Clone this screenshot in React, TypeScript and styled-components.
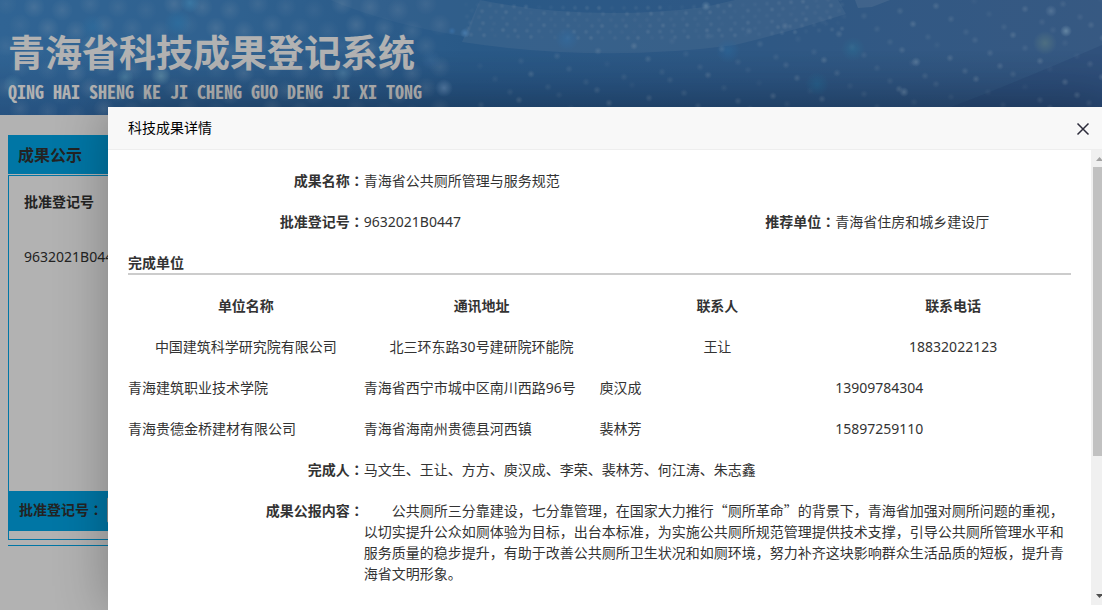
import React from "react";
import styled, { createGlobalStyle } from "styled-components";

const GlobalStyle = createGlobalStyle`
  *, *::before, *::after { box-sizing: border-box; }
  html, body { margin: 0; padding: 0; }
  body {
    background: #fff;
    color: #333;
    font-family: "Noto Sans", "Noto Sans CJK SC", sans-serif;
    font-size: 14px;
    line-height: 21px;
  }
  h1, h2, h3, p, dl, dd { margin: 0; font-size: inherit; font-weight: inherit; }
`;

/* ---------- page behind the dialog ---------- */

const Page = styled.div`
  position: relative;
  min-height: 100vh;
  overflow: hidden;
`;

const Banner = styled.header`
  display: grid;
  height: 115px;
  overflow: hidden;
  background: #3f86c8;
  > * { grid-area: 1 / 1; }
`;

const BannerArt = styled.svg`
  width: 100%;
  height: 115px;
`;

const BannerText = styled.div`
  padding: 29px 8px 0;
  color: #fff;
  white-space: nowrap;
`;

const SiteTitle = styled.h1`
  font-family: "Noto Sans CJK SC", sans-serif;
  font-size: 37px;
  font-weight: 700;
  line-height: 44px;
`;

const SiteSubtitle = styled.p`
  margin-top: 6px;
  font-family: "Noto Sans Mono CJK SC", "Liberation Mono", monospace;
  font-size: 18px;
  font-weight: 700;
  line-height: 24px;
`;

const Main = styled.main`
  padding: 20px 8px 0;
`;

const PanelTitle = styled.h2`
  padding: 2px 10px 0;
  background: #00aaec;
  font-size: 16px;
  font-weight: 700;
  line-height: 37px;
`;

const Panel = styled.section`
  display: flex;
  flex-direction: column;
  height: 365px;
  margin-top: 1px;
  border: 1px solid #00aaec;
`;

const ListTable = styled.table`
  border-collapse: collapse;
  th, td {
    padding: 0 15px;
    text-align: left;
    line-height: 52px;
  }
  td { line-height: 58px; }
`;

const SearchBar = styled.form`
  display: flex;
  align-items: center;
  gap: 4px;
  height: 40px;
  margin-top: auto;
  margin-bottom: 8px;
  padding: 0 10px 3px;
  background: #00aaec;
  font-weight: 700;
`;

const SearchInput = styled.input`
  width: 180px;
  height: 26px;
  border: 1px solid #ccc;
  border-radius: 2px;
  background: #fff;
`;

const Rule = styled.hr`
  height: 1px;
  margin: 5px 0 0;
  border: 0;
  background: #00aaec;
`;

/* ---------- dialog ---------- */

const Shade = styled.div`
  position: absolute;
  inset: 0;
  z-index: 2;
  display: flex;
  padding: 107px 0 0 108px;
  overflow: hidden;
  background: rgba(0, 0, 0, 0.3);
`;

const Dialog = styled.section`
  display: flex;
  flex: 1;
  flex-direction: column;
  margin-right: -6px;
  background: #fff;
  box-shadow: 1px 1px 50px rgba(0, 0, 0, 0.3);
`;

const DialogHeader = styled.header`
  display: flex;
  align-items: flex-start;
  justify-content: space-between;
  height: 43px;
  padding: 10px 16px 0 20px;
  border-bottom: 1px solid #eee;
  background: #f8f8f8;
  color: #000;
`;

const CloseButton = styled.button`
  display: flex;
  align-items: center;
  height: 24px;
  padding: 0 2px;
  border: 0;
  background: none;
  color: #2d2c3b;
  cursor: pointer;
`;

const DialogBody = styled.div`
  display: flex;
  flex: 1;
  min-height: 0;
  padding-bottom: 5px;
`;

const Content = styled.div`
  flex: 1;
  min-width: 0;
  padding: 10px 20px 0;
`;

const Fields = styled.dl`
  display: grid;
  grid-template-columns: repeat(4, 1fr);
`;

const Label = styled.dt`
  padding: 10px 0;
  font-weight: 700;
  text-align: right;
`;

const ColonMark = styled.span`
  font-family: "Noto Sans CJK TC", sans-serif;
`;

const Value = styled.dd<{ $span?: number }>`
  grid-column: span ${(p) => p.$span ?? 1};
  padding: 10px 0;
`;

const Report = styled(Value)`
  padding-right: 6px;
  font-family: "Noto Sans CJK SC", sans-serif;
  text-indent: 2em;
`;

const SectionTitle = styled.h3`
  margin-bottom: 10px;
  padding-top: 10px;
  border-bottom: 2px solid #ccc;
  font-weight: 700;
`;

const UnitTable = styled.table`
  width: 100%;
  border-collapse: collapse;
  table-layout: fixed;
`;

const Cell = styled.td<{ $center?: boolean }>`
  padding: 10px 0;
  text-align: ${(p) => (p.$center ? "center" : "left")};
`;

const ScrollTrack = styled.div`
  display: flex;
  flex-direction: column;
  align-items: center;
  width: 17px;
  background: #f0f0f0;
`;

const ScrollArrow = styled.svg`
  width: 17px;
  height: 17px;
`;

const ScrollThumb = styled.div`
  width: 13px;
  height: 289px;
  margin-bottom: auto;
  background: #c1c1c1;
`;

/* The Traditional Chinese form of the colon sits in the middle of its box. */
const Colon = () => <ColonMark lang="zh-TW">：</ColonMark>;

const units = [
  ["中国建筑科学研究院有限公司", "北三环东路30号建研院环能院", "王让", "18832022123"],
  ["青海建筑职业技术学院", "青海省西宁市城中区南川西路96号", "庾汉成", "13909784304"],
  ["青海贵德金桥建材有限公司", "青海省海南州贵德县河西镇", "裴林芳", "15897259110"],
];

type Dot = { x: number; y: number; r: number; o: number };

const bandDots: Dot[] = [];
for (let row = 0; row < 6; row++) {
  for (let i = 0; i < 32; i++) {
    const seed = (i * 37 + row * 53 + i * row * 7) % 17;
    const x = 466 + i * 12 + (row % 2) * 4 + (seed % 3);
    const sag = 1 - ((x - 610) / 240) ** 2;
    const y = 4 + row * 6 + sag * 10 - 6;
    bandDots.push({ x, y, r: 3, o: 0.03 + (seed / 17) * 0.17 });
  }
}

const fieldDots: Dot[] = [];
for (let row = 0; row < 10; row++) {
  for (let i = 0; i < 18; i++) {
    const seed = (i * 29 + row * 41 + i * row * 5) % 13;
    const x = 480 + i * 38 + (row % 3) * 13 + (seed % 5);
    const y = 66 + row * 13 - i * 5;
    fieldDots.push({ x, y, r: 4, o: 0.06 + (seed / 13) * 0.2 });
  }
}

const hazeDots: Dot[] = [];
for (let row = 0; row < 6; row++) {
  for (let i = 0; i < 16; i++) {
    const seed = (i * 31 + row * 23) % 11;
    hazeDots.push({
      x: 6 + i * 28 + (row % 2) * 14,
      y: 4 + row * 21 + (i % 3) * 3,
      r: 11,
      o: 0.08 + (seed / 11) * 0.12,
    });
  }
}

const glows: Array<[number, number, number, string, number]> = [
  [190, 3, 10, "#5cb8f5", 0.7],
  [178, 23, 14, "#3fa4ec", 0.6],
  [93, 27, 13, "#3fa4ec", 0.4],
  [125, 77, 9, "#7cc5ee", 0.6],
  [161, 76, 10, "#8accf0", 0.7],
  [343, 73, 10, "#7cc0f0", 0.6],
  [13, 84, 10, "#7cc5ee", 0.5],
  [444, 88, 9, "#83b9f2", 0.8],
  [431, 60, 10, "#5b9bdc", 0.5],
  [465, 33, 5, "#6fb8ff", 0.8],
  [452, 31, 4, "#55a6f5", 0.7],
  [567, 39, 12, "#4a9be6", 0.6],
  [728, 51, 12, "#3f94dd", 0.6],
  [853, 49, 12, "#3f9bd2", 0.6],
  [817, 84, 12, "#3592cf", 0.6],
  [1045, 43, 12, "#86b3b8", 0.6],
  [1066, 31, 6, "#a2d0f5", 0.8],
  [1051, 11, 6, "#91bce8", 0.6],
  [706, 6, 5, "#91c3ef", 0.7],
  [916, 62, 5, "#91bce8", 0.7],
  [904, 92, 5, "#91bce8", 0.7],
];

function BannerBackdrop() {
  return (
    <BannerArt viewBox="0 0 1102 115" preserveAspectRatio="xMidYMid slice" aria-hidden="true">
      <defs>
        <linearGradient id="sky" x1="0" y1="0" x2="1" y2="0">
          <stop offset="0" stopColor="#4690d4" />
          <stop offset="0.2" stopColor="#458cce" />
          <stop offset="0.42" stopColor="#3c80c2" />
          <stop offset="0.7" stopColor="#447fbe" />
          <stop offset="1" stopColor="#4f80bb" />
        </linearGradient>
        <linearGradient id="dusk" x1="0" y1="0" x2="0" y2="1">
          <stop offset="0.45" stopColor="#1c4684" stopOpacity="0" />
          <stop offset="1" stopColor="#1c4684" stopOpacity="0.35" />
        </linearGradient>
        <radialGradient id="dot">
          <stop offset="0" stopColor="#b5d5f5" />
          <stop offset="1" stopColor="#b5d5f5" stopOpacity="0" />
        </radialGradient>
        {glows.map(([, , , color], i) => (
          <radialGradient id={`glow${i}`} key={i}>
            <stop offset="0" stopColor={color} />
            <stop offset="0.4" stopColor={color} stopOpacity="0.6" />
            <stop offset="1" stopColor={color} stopOpacity="0" />
          </radialGradient>
        ))}
      </defs>
      <rect width="1102" height="115" fill="url(#sky)" />
      <rect width="1102" height="115" fill="url(#dusk)" />
      <path d="M330 0 H480 L468 37 Q390 25 330 0 Z" fill="#7fb0e0" opacity="0.14" />
      <path d="M480 0 Q590 22 705 7 L735 0 H838 L846 14 Q790 32 735 45 Q600 63 462 42 Z" fill="#7fa9d8" opacity="0.26" />
      <path d="M855 0 H890 L872 7 L858 8 Z" fill="#8fb5dd" opacity="0.3" />
      <path d="M1102 45 Q1010 85 930 115 H1102 Z" fill="#284f92" opacity="0.22" />
      <g fill="url(#dot)">
        {[...bandDots, ...fieldDots, ...hazeDots].map((d, i) => (
          <circle key={i} cx={d.x} cy={d.y} r={d.r} opacity={d.o * 1.5} />
        ))}
      </g>
      {glows.map(([x, y, r, , o], i) => (
        <circle key={i} cx={x} cy={y} r={r} fill={`url(#glow${i})`} opacity={o} />
      ))}
    </BannerArt>
  );
}

export default function App() {
  return (
    <Page lang="zh-CN">
      <GlobalStyle />
      <Banner>
        <BannerBackdrop />
        <BannerText>
          <SiteTitle>青海省科技成果登记系统</SiteTitle>
          <SiteSubtitle>QING HAI SHENG KE JI CHENG GUO DENG JI XI TONG</SiteSubtitle>
        </BannerText>
      </Banner>
      <Main>
        <PanelTitle>成果公示</PanelTitle>
        <Panel>
          <ListTable>
            <thead>
              <tr><th scope="col">批准登记号</th></tr>
            </thead>
            <tbody>
              <tr><td>9632021B0447</td></tr>
            </tbody>
          </ListTable>
          <SearchBar>
            <label htmlFor="regNo">批准登记号<Colon /></label>
            <SearchInput id="regNo" type="text" />
          </SearchBar>
        </Panel>
        <Rule />
      </Main>

      <Shade>
        <Dialog role="dialog" aria-labelledby="dialogTitle">
          <DialogHeader>
            <h2 id="dialogTitle">科技成果详情</h2>
            <CloseButton type="button" aria-label="关闭">
              <svg width="14" height="14" viewBox="0 0 14 14" fill="none" stroke="currentColor" strokeWidth="1.5">
                <path d="M1.5 1.5 L12.5 12.5 M12.5 1.5 L1.5 12.5" />
              </svg>
            </CloseButton>
          </DialogHeader>
          <DialogBody>
            <Content>
              <Fields>
                <Label>成果名称<Colon /></Label>
                <Value $span={3}>青海省公共厕所管理与服务规范</Value>
                <Label>批准登记号<Colon /></Label>
                <Value>9632021B0447</Value>
                <Label>推荐单位<Colon /></Label>
                <Value>青海省住房和城乡建设厅</Value>
              </Fields>
              <SectionTitle>完成单位</SectionTitle>
              <UnitTable>
                <thead>
                  <tr>
                    {["单位名称", "通讯地址", "联系人", "联系电话"].map((name) => (
                      <Cell as="th" scope="col" $center key={name}>{name}</Cell>
                    ))}
                  </tr>
                </thead>
                <tbody>
                  {units.map((unit, row) => (
                    <tr key={unit[0]}>
                      {unit.map((text) => (
                        <Cell $center={row === 0} key={text}>{text}</Cell>
                      ))}
                    </tr>
                  ))}
                </tbody>
              </UnitTable>
              <Fields>
                <Label>完成人<Colon /></Label>
                <Value $span={3}>马文生、王让、方方、庾汉成、李荣、裴林芳、何江涛、朱志鑫</Value>
                <Label>成果公报内容<Colon /></Label>
                <Report $span={3}>
                  公共厕所三分靠建设，七分靠管理，在国家大力推行“厕所革命”的背景下，青海省加强对厕所问题的重视，以切实提升公众如厕体验为目标，出台本标准，为实施公共厕所规范管理提供技术支撑，引导公共厕所管理水平和服务质量的稳步提升，有助于改善公共厕所卫生状况和如厕环境，努力补齐这块影响群众生活品质的短板，提升青海省文明形象。
                </Report>
              </Fields>
            </Content>
            <ScrollTrack aria-hidden="true">
              <ScrollArrow viewBox="0 0 17 17"><path d="M5 11 L8.5 7 L12 11 Z" fill="#a3a3a3" /></ScrollArrow>
              <ScrollThumb />
              <ScrollArrow viewBox="0 0 17 17"><path d="M5 6 H12 L8.5 10 Z" fill="#505050" /></ScrollArrow>
            </ScrollTrack>
          </DialogBody>
        </Dialog>
      </Shade>
    </Page>
  );
}
